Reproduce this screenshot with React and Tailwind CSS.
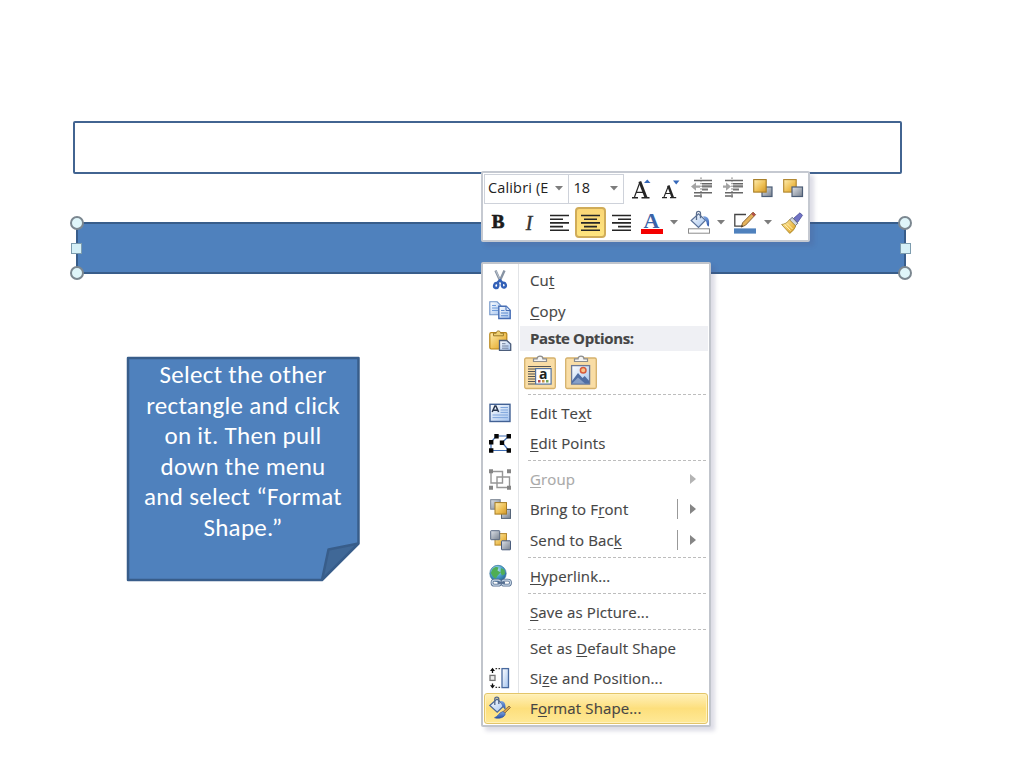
const handles = [
  'left-[70px] top-[216px]',
  'left-[70px] top-[266px]',
  'left-[898px] top-[216px]',
  'left-[898px] top-[266px]',
];

// Shared gradients for the office icons
const IconDefs = () => (
  <svg className="absolute h-0 w-0">
    <defs>
      <linearGradient id="gold" x1="0" y1="0" x2="1" y2="1">
        <stop offset="0" stopColor="#ffeeb0" />
        <stop offset="0.6" stopColor="#edbd4f" />
        <stop offset="1" stopColor="#cf962c" />
      </linearGradient>
      <linearGradient id="steel" x1="0" y1="0" x2="1" y2="1">
        <stop offset="0" stopColor="#dfe3e9" />
        <stop offset="1" stopColor="#76808e" />
      </linearGradient>
      <linearGradient id="sky" x1="0" y1="0" x2="1" y2="1">
        <stop offset="0" stopColor="#ffffff" />
        <stop offset="1" stopColor="#a3c3ee" />
      </linearGradient>
      <linearGradient id="blue" x1="0" y1="0" x2="0" y2="1">
        <stop offset="0" stopColor="#7ea6e2" />
        <stop offset="1" stopColor="#2850a4" />
      </linearGradient>
      <radialGradient id="globe" cx="0.4" cy="0.3" r="0.8">
        <stop offset="0" stopColor="#c3eefa" />
        <stop offset="0.5" stopColor="#4a9fc9" />
        <stop offset="1" stopColor="#1b5387" />
      </radialGradient>
    </defs>
  </svg>
);

const Icon = ({ children, className = 'h-6 w-6' }) => (
  <svg className={className} viewBox="0 0 24 24" fill="none">
    {children}
  </svg>
);

const CutIcon = () => (
  <Icon>
    <path d="M7.5 2.500l5.200 11.500M16.500 2.500l-5.200 11.500" stroke="#8793a3" strokeWidth="2.4" />
    <path d="M8 3l5 11" stroke="#c4ccd6" strokeWidth="0.8" />
    <ellipse cx="8.3" cy="17.600" rx="2.1" ry="2.5" stroke="#3361b8" strokeWidth="2.4" transform="rotate(15 8.3 17.4)" />
    <ellipse cx="15.8" cy="17.2" rx="2" ry="2.4" stroke="#3361b8" strokeWidth="2.4" transform="rotate(-15 15.8 17.2)" />
    <path d="M9.500 14.700l2.500-2.500 2.600 2.600" stroke="#3361b8" strokeWidth="2.400" />
  </Icon>
);

const CopyIcon = () => (
  <Icon>
    <path d="M1.8 2.8h7.4l3.6 3.6v9.4h-11z" fill="url(#sky)" stroke="#6e92c8" strokeWidth="1.1" />
    <path d="M4 6.5h4M4 9h6M4 11.5h6" stroke="#6d9ad9" />
    <path d="M10.8 7.3h7.4l4 4v8.2H10.8z" fill="url(#sky)" stroke="#456db4" strokeWidth="1.4" />
    <path d="M18 7.5v4h4" fill="#d7e6fb" stroke="#456db4" />
    <path d="M13 11.5h3.5M13 14h7M13 16.7h7" stroke="#5c8bd0" strokeWidth="1.1" />
  </Icon>
);

const PasteIcon = () => (
  <Icon>
    <rect x="1.8" y="3.6" width="17" height="16.4" rx="1.4" fill="url(#gold)" stroke="#b98618" strokeWidth="1.2" />
    <path d="M5.5 6.8V4.2h2.7c0-3 4.4-3 4.4 0h2.8v2.6z" fill="#efd072" stroke="#9b792a" />
    <path d="M11.5 11.5h7.2l4 3.5v6.3H11.5z" fill="url(#sky)" stroke="#4c5d7b" strokeWidth="1.3" />
    <path d="M14 14.7h3.5M14 17h6.5M14 19.2h6.5" stroke="#71809b" />
  </Icon>
);

const EditTextIcon = () => (
  <Icon>
    <rect x="2" y="3.3" width="20" height="17.2" fill="url(#sky)" stroke="#426194" strokeWidth="1.4" />
    <path d="M4.2 11l2.700-6h1l2.700 6M5.500 9.200h3.800" stroke="#28364f" strokeWidth="1.5" />
    <path d="M12.5 6.5h7.5M12.5 9h7.5M12.5 11.4h7.5M4.5 14h15.5M4.5 16.6h15.5" stroke="#7ea5dc" />
  </Icon>
);

const EditPointsIcon = () => (
  <Icon>
    <path d="M3 19.5V11L8.5 5H21l-7 6.5 7 8z" stroke="#3f6db4" strokeWidth="1.2" />
    <path
      d="M1 9h4.400v4.400H1zM6.300 3h4.400v4.400H6.300zM18.600 3H23v4.400h-4.400zM11.800 9.500h4.400v4.400h-4.400zM1 17.300h4.400v4.400H1zM18.600 17.300H23v4.400h-4.400z"
      fill="#050505"
    />
  </Icon>
);

const GroupIcon = () => (
  <Icon>
    <path d="M3 4.5h11.5V16H3zM9 10h12.5v10.5H9z" stroke="#969696" strokeWidth="1.4" />
    <path d="M1 2.2h4v4H1zM19 2.2h4v4h-4zM1 18.8h4v4H1zM19 18.8h4v4h-4z" fill="#858585" />
  </Icon>
);

const BringToFrontIcon = () => (
  <Icon>
    <rect x="2.7" y="2.7" width="9.5" height="9.5" fill="url(#steel)" stroke="#77808e" />
    <rect x="13.500" y="12.4" width="9" height="9" fill="url(#steel)" stroke="#566579" />
    <rect x="7" y="5.6" width="11.5" height="11.5" fill="url(#gold)" stroke="#a67c24" />
  </Icon>
);

const SendToBackIcon = () => (
  <Icon>
    <rect x="7" y="5.6" width="11.5" height="11.5" fill="url(#gold)" stroke="#b2862e" />
    <rect x="2.7" y="2.7" width="9" height="9" rx="0.5" fill="url(#steel)" stroke="#5b6b84" />
    <rect x="13.500" y="12.8" width="9" height="9" rx="0.5" fill="url(#steel)" stroke="#4b5d7d" />
  </Icon>
);

const HyperlinkIcon = () => (
  <Icon>
    <circle cx="10" cy="9.5" r="8.2" fill="url(#globe)" stroke="#35729b" strokeWidth="0.7" />
    <path d="M4.500 5c2-2.500 5-2.500 6-1.500l-1 3 3 2-3 3.200-2 3.300-3-3-1.700-3zM13 4l3.500 2 .5 4-3 1.500-1.500-3z" fill="#4fae55" />
    <rect x="4" y="16.200" width="8.500" height="5" rx="2.5" stroke="#566f91" strokeWidth="2.8" />
    <rect x="14" y="16.200" width="8.500" height="5" rx="2.5" stroke="#566f91" strokeWidth="2.8" />
    <rect x="4" y="16.200" width="8.500" height="5" rx="2.5" stroke="#c3d4e5" strokeWidth="1.2" />
    <rect x="14" y="16.200" width="8.500" height="5" rx="2.5" stroke="#c3d4e5" strokeWidth="1.2" />
    <path d="M9.500 18.700h7.500" stroke="#566f91" strokeWidth="2.400" />
  </Icon>
);

const SizePositionIcon = () => (
  <Icon>
    <rect x="14" y="2.6" width="6.5" height="19" fill="url(#sky)" stroke="#48699e" strokeWidth="1.3" />
    <rect x="2" y="9.4" width="5" height="5" fill="#ececec" stroke="#767676" strokeWidth="1.3" />
    <path d="M4.5 3v4M4.5 17.5v4" stroke="#111" strokeWidth="1.3" />
    <path d="M4.5 1.8L2 5h5zM4.5 22.5L2 19.3h5z" fill="#111" />
    <path d="M7.5 2.6h1.6M10.5 2.6h1.6M7.5 21.4h1.6M10.5 21.4h1.6" stroke="#333" strokeWidth="1.4" />
  </Icon>
);

const FormatShapeIcon = () => (
  <Icon>
    <path d="M1.8 9.5L9 3l7.2 6.5-7 6.7z" fill="url(#sky)" stroke="#4a6698" strokeWidth="1.2" />
    <path d="M6.8 9V3c0-2.5 4-2.5 4 0v5" stroke="#53678a" strokeWidth="1.3" />
    <path d="M12 5c4-.5 6 2 5.5 9l-3-3.5z" fill="url(#blue)" />
    <path d="M22.500 11.500l-7 7-2-1.500 7.500-7z" fill="#d7a04a" stroke="#7b643b" strokeWidth="0.8" />
    <path d="M14.500 15.700c3 .5 3.500 2.600 1.500 4.500-2.300 2.300-7 2.500-9.500 1.500 3.500-1 4.500-5.300 8-6z" fill="url(#blue)" stroke="#2850a4" strokeWidth="0.6" />
  </Icon>
);

const Bucket = () => (
  <Icon className="h-[26px] w-6">
    <path d="M4.2 9.5L11.5 2.8l7 6.4-7 7.2z" fill="url(#sky)" stroke="#5b7299" strokeWidth="1.2" />
    <path d="M9.5 9V2.4c0-2.8 4-2.8 4 0v4.8" stroke="#596d8d" strokeWidth="1.3" />
    <path d="M16 5.3c4.5-.8 7.2 2.500 5.800 10.200-1 0-2-1-2.400-4.400z" fill="url(#blue)" />
    <rect x="1.5" y="17.8" width="21" height="4.4" fill="#fff" stroke="#8c8c8c" />
  </Icon>
);

const Pen = () => (
  <Icon className="h-[26px] w-6">
    <path d="M13 3.5H1.8v11.7H9" stroke="#444" strokeWidth="1.3" />
    <path d="M20 1.2l2.600 2.400L12.500 14.200l-4.200 1.900 1.300-4.300z" fill="#e5b35b" stroke="#896638" strokeWidth="1" />
    <path d="M18.3 3l2.600 2.400 1.700-1.800L20 1.200z" fill="#b3514b" />
    <path d="M8.3 16.1l1.800-.8-1.200-1.300z" fill="#222" />
    <rect x="1" y="17.4" width="22" height="5.2" fill="#4f81bd" />
  </Icon>
);

const Brush = () => (
  <Icon>
    <path d="M20 1.800l2.500 2.500-5 7.200-4-4z" fill="#7073c5" stroke="#484b96" strokeWidth="0.8" />
    <path d="M12.2 6.3l5.600 6-2.600 2.600-5.800-5.700z" fill="#cfd4dd" stroke="#596170" strokeWidth="0.9" />
    <path d="M9.4 8.700l6.300 6.200c-1 3-3.200 5.500-6 7.500L1.600 13.500c3-.4 5.800-1.600 7.800-4.800z" fill="url(#gold)" stroke="#a38427" strokeWidth="0.8" />
    <path d="M4.500 13.500l6 6M7 12.500l5.500 5.500" stroke="#fff2ac" strokeWidth="1" />
  </Icon>
);

const Lines = ({ d }) => (
  <svg className="h-[18px] w-[21px]" viewBox="0 0 21 18">
    <path d={d} stroke="#262626" strokeWidth="1.6" />
  </svg>
);

const Indent = ({ arrow }) => (
  <Icon>
    <path d="M11 1.5v21" stroke="#555" strokeDasharray="1.3 1.4" />
    <path d="M4 4.5h18M12 7.8h10M4 16.8h18M4 20h8" stroke="#666" strokeWidth="1.4" />
    <path d="M12 10.3h10M12 13.5h6" stroke="#777" strokeWidth="2.2" />
    <path d={arrow} fill="#a4a4a4" />
  </Icon>
);

const Caret = () => (
  <svg className="h-[5px] w-2 shrink-0" viewBox="0 0 8 5">
    <path d="M0 0h8L4 4.600z" fill="#7d7d7d" />
  </svg>
);

const Cell = ({ className, children }) => (
  <div className={`flex shrink-0 items-center justify-center ${className}`}>{children}</div>
);

const MiniToolbar = () => (
  <div className="absolute left-[481px] top-[171px] h-[71px] w-[329px] rounded-[2px] border-2 border-[#c5c9d1] bg-white pl-px pt-px shadow-[4px_4px_4px_rgba(80,80,130,0.2)]">
    <div className="flex h-[30px]">
      <div className="flex w-[86px] items-center justify-between border border-[#ced2da] pl-[3px] pr-[5px] pb-0.5">
        <span className="w-[63px] overflow-hidden whitespace-nowrap font-['Open_Sans'] text-[14.5px] leading-5 tracking-[0.150px] text-[#222]">
          Calibri (E
        </span>
        <Caret />
      </div>
      <div className="flex w-[55px] items-center justify-between border border-l-0 border-[#ced2da] pl-1 pr-[5px] pb-0.5 font-['Open_Sans'] text-[14.5px] text-[#222]">
        18
        <Caret />
      </div>
      <Cell className="h-[29px] w-[31px] pl-1">
        <Icon>
          <path d="M14 6h6.500l-3.200-3.600z" fill="#3568b9" />
          <path d="M9.800 5.500L4.500 20M6.300 15.300h7" stroke="#252525" strokeWidth="1.2" />
          <path d="M9.800 4.500l6.200 16" stroke="#252525" strokeWidth="2.9" />
          <path d="M2 20.800h6M11.500 20.800h8" stroke="#252525" strokeWidth="1.4" />
        </Icon>
      </Cell>
      <Cell className="h-[29px] w-[31px]">
        <Icon>
          <path d="M14 3.500h6.500l-3.300 4z" fill="#3568b9" />
          <path d="M9.200 9.5L5 20M6.300 16.5h6" stroke="#252525" strokeWidth="1.1" />
          <path d="M9.300 8.5l4.500 12" stroke="#252525" strokeWidth="2.5" />
          <path d="M3 20.7h5M11 20.700h6.200" stroke="#252525" strokeWidth="1.3" />
        </Icon>
      </Cell>
      <Cell className="h-[27px] w-8">
        <Indent arrow="M1 10.500L6 6.500v3h4v2.200H6v3z" />
      </Cell>
      <Cell className="h-[27px] w-[30px]">
        <Indent arrow="M10 10.500L5 6.500v3H2v2.200h3v3z" />
      </Cell>
      <Cell className="h-[27px] w-[30px]">
        <Icon>
          <rect x="11" y="11" width="10" height="9.500" fill="url(#steel)" stroke="#4c5d76" strokeWidth="1.2" />
          <rect x="2.700" y="3.600" width="12.500" height="12.500" fill="url(#gold)" stroke="#a67c24" strokeWidth="1.1" />
        </Icon>
      </Cell>
      <Cell className="h-[27px] w-[30px]">
        <Icon>
          <rect x="2.700" y="3.600" width="12.500" height="12.500" fill="url(#gold)" stroke="#b0852c" strokeWidth="1.1" />
          <rect x="11" y="11" width="10.500" height="9.500" fill="url(#steel)" stroke="#4c5d76" strokeWidth="1.2" />
        </Icon>
      </Cell>
    </div>
    <div className="mt-[3px] flex h-[31px] items-center">
      <Cell className="w-[28px] font-['Liberation_Serif'] text-[19px] font-bold text-[#1c1c1c] [-webkit-text-stroke:0.7px_#1c1c1c]">B</Cell>
      <Cell className="w-[34px] font-['Liberation_Serif'] text-[20px] italic text-[#333] [-webkit-text-stroke:0.4px_#333]">I</Cell>
      <Cell className="w-[29px] pr-0.5">
        <Lines d="M1 1.5h19M1 5.2h13M1 8.9h19M1 12.6h13M1 16.3h19" />
      </Cell>
      <Cell className="h-[31px] w-[31px] rounded-[4px] border-2 border-[#d0ac59] bg-linear-to-b from-[#fbd776] to-[#fee47e]">
        <Lines d="M1 1.5h19M4 5.2h13M1 8.9h19M4 12.6h13M1 16.3h19" />
      </Cell>
      <Cell className="w-[30px]">
        <Lines d="M1 1.5h19M7 5.2h13M1 8.9h19M7 12.6h13M1 16.3h19" />
      </Cell>
      <Cell className="w-[31px]">
        <div className="flex flex-col items-center">
          <span className="h-[18px] font-['Liberation_Serif'] text-[22px] font-bold leading-[20px] text-[#3b63a8]">A</span>
          <span className="h-[5px] w-[22px] bg-[#f40000]" />
        </div>
      </Cell>
      <Cell className="w-[14px]"><Caret /></Cell>
      <Cell className="w-[36px]"><Bucket /></Cell>
      <Cell className="w-[8px]"><Caret /></Cell>
      <Cell className="w-[39px]"><Pen /></Cell>
      <Cell className="w-[8px]"><Caret /></Cell>
      <Cell className="w-[34px] pl-1.5"><Brush /></Cell>
    </div>
  </div>
);

// accel is the index of the underlined access key
const MenuItem = ({ label, accel, icon: ItemIcon, split, submenu, disabled, active }) => (
  <div
    className={`flex h-[30.4px] items-center ${
      active
        ? 'relative mx-px rounded-[3px] border border-[#e3c569] bg-linear-to-b from-[#fff0b8] via-[#fddf7c] to-[#fee997] pl-[3px] shadow-[inset_0_0_0_1px_#fff2bd]'
        : 'pl-[5px]'
    } ${disabled ? 'text-[#a9a9a9]' : 'text-[#454545]'}`}
  >
    <div className="mr-[18px] h-6 w-6">{ItemIcon && <ItemIcon />}</div>
    <span className="flex-1 whitespace-nowrap">
      {label.slice(0, accel)}
      <span className="underline decoration-1 underline-offset-2">{label[accel]}</span>
      {label.slice(accel + 1)}
    </span>
    {split && <span className="mr-[12px] h-5 w-[1.5px] bg-[#999]" />}
    {submenu && (
      <svg className="mr-[13px] h-[10px] w-[6px]" viewBox="0 0 6 10">
        <path d="M0 0l6 5-6 5z" fill={disabled ? '#b4b4b4' : '#858585'} />
      </svg>
    )}
  </div>
);

const Divider = () => (
  <div className="flex h-[5.6px] items-center pl-[45px] pr-px">
    <div className="h-px w-full bg-[repeating-linear-gradient(90deg,#bdbdbd_0,#bdbdbd_3px,transparent_3px,transparent_5px)]" />
  </div>
);

const Clipboard = ({ children }) => (
  <svg className="h-[35px] w-8" viewBox="0 0 32 35" fill="none">
    <rect x="0.7" y="3" width="30.6" height="30.5" rx="1.5" fill="#f9dda5" stroke="#d5b16c" strokeWidth="1.3" />
    <path d="M9.5 6.5V3.8h3.6C13.1.2 18.9.2 18.900 3.800h3.600v2.700z" fill="#f4f4f4" stroke="#8c8c8c" strokeWidth="1.2" />
    {children}
  </svg>
);

const PasteOptions = () => (
  <>
    <div className="ml-[37px] mr-px flex h-[25px] items-center bg-[#eff0f4] pl-[10px] font-bold tracking-[-0.350px] text-[#454545]">
      Paste Options:
    </div>
    <div className="flex h-[41px] gap-[9px] pl-[41px] pt-1">
      <Clipboard>
        <path d="M4 11.500h23M4 14h7M4 16.500h7M4 19h7M4 21.500h7M4 24h7M4 26.500h7M4 29h7" stroke="#555" strokeWidth="1.2" />
        <rect x="11.600" y="13.600" width="15.500" height="15.500" fill="#fff" stroke="#56749f" strokeWidth="1.2" />
        <text x="15" y="23.800" fill="#222" fontSize="14" fontWeight="bold" fontFamily="Open Sans">a</text>
        <path d="M14 25h2.500v2.500H14z" fill="#b4494e" />
        <path d="M18 25h2.500v2.500H18z" fill="#c79043" />
        <path d="M22 25h2.500v2.500H22z" fill="#73a456" />
      </Clipboard>
      <Clipboard>
        <rect x="6.600" y="10.600" width="18" height="18.500" fill="url(#sky)" stroke="#6c7895" strokeWidth="1.3" />
        <path d="M7 26l6-8 4.500 5 2.200-2 4.500 5v2.800H7z" fill="#4f6da3" />
        <path d="M7 28.500l6-6 7 6z" fill="#879fc7" />
        <circle cx="18.200" cy="15.300" r="2.800" fill="#f7c387" stroke="#d75a3b" strokeWidth="1.5" />
      </Clipboard>
    </div>
  </>
);

const ContextMenu = () => (
  <div className="absolute left-[481px] top-[262px] h-[465px] w-[230px] rounded-[2px] border-2 border-[#c1c5cc] bg-white pt-px font-['Open_Sans'] text-[15px] leading-5 tracking-[0.130px] shadow-[4px_4px_4px_rgba(80,80,130,0.2)] [-webkit-text-stroke:0.150px]">
    <div className="absolute left-[35px] top-0 h-[430px] w-px bg-[#e2e4e7]" />
    <MenuItem label="Cut" accel={2} icon={CutIcon} />
    <MenuItem label="Copy" accel={0} icon={CopyIcon} />
    {/* the clipboard icon sits in the gutter beside the header */}
    <div className="absolute left-[5px] top-[65px] h-6 w-6"><PasteIcon /></div>
    <PasteOptions />
    <Divider />
    <MenuItem label="Edit Text" accel={7} icon={EditTextIcon} />
    <MenuItem label="Edit Points" accel={0} icon={EditPointsIcon} />
    <Divider />
    <MenuItem label="Group" accel={0} icon={GroupIcon} submenu disabled />
    <MenuItem label="Bring to Front" accel={10} icon={BringToFrontIcon} split submenu />
    <MenuItem label="Send to Back" accel={11} icon={SendToBackIcon} split submenu />
    <Divider />
    <MenuItem label="Hyperlink..." accel={0} icon={HyperlinkIcon} />
    <Divider />
    <MenuItem label="Save as Picture..." accel={0} />
    <Divider />
    <MenuItem label="Set as Default Shape" accel={7} />
    <MenuItem label="Size and Position..." accel={2} icon={SizePositionIcon} />
    <MenuItem label="Format Shape..." accel={1} icon={FormatShapeIcon} active />
  </div>
);

const FoldedNote = () => (
  <div className="absolute left-[126px] top-[356px] h-[226px] w-[234px]">
    <svg className="absolute inset-0 h-full w-full" viewBox="0 0 234 226">
      <path d="M2 2h231v185.500L196 224H2z" fill="#4f81bd" />
      <path d="M196 224l6.500-30.500 30-6z" fill="#406897" />
      <path d="M196 224l6.500-30.500 30-6L196 224H2V2h230.500v185.500" fill="none" stroke="#385d8a" strokeWidth="2.5" strokeLinejoin="round" />
    </svg>
    <p className="relative pt-[4px] text-center font-['Carlito','Lato',sans-serif] text-[25px] leading-[30.6px] tracking-[0.3px] text-white">
      Select the other
      <br />
      rectangle and click
      <br />
      on it. Then pull
      <br />
      down the menu
      <br />
      and select “Format
      <br />
      Shape.”
    </p>
  </div>
);

export default function App() {
  return (
    <div className="relative h-[768px] w-[1024px] overflow-hidden bg-white">
      <IconDefs />
      <div className="absolute left-[73px] top-[121px] h-[53px] w-[829px] rounded-[2px] border-[2.5px] border-[#426491] bg-white" />
      <div className="absolute left-[76px] top-[222px] h-[52px] w-[830px] border-[2.5px] border-[#385d8a] bg-[#4f81bd]" />
      {handles.map((pos) => (
        <div key={pos} className={`absolute h-[14px] w-[14px] rounded-full border-2 border-[#7b8790] bg-[#dff5f9] ${pos}`} />
      ))}
      <div className="absolute left-[71px] top-[243px] h-[11px] w-[11px] border border-[#7d9cae] bg-[#d5f0f7]" />
      <div className="absolute left-[900px] top-[243px] h-[11px] w-[11px] border border-[#7d9cae] bg-[#d5f0f7]" />
      <FoldedNote />
      <MiniToolbar />
      <ContextMenu />
    </div>
  );
}
